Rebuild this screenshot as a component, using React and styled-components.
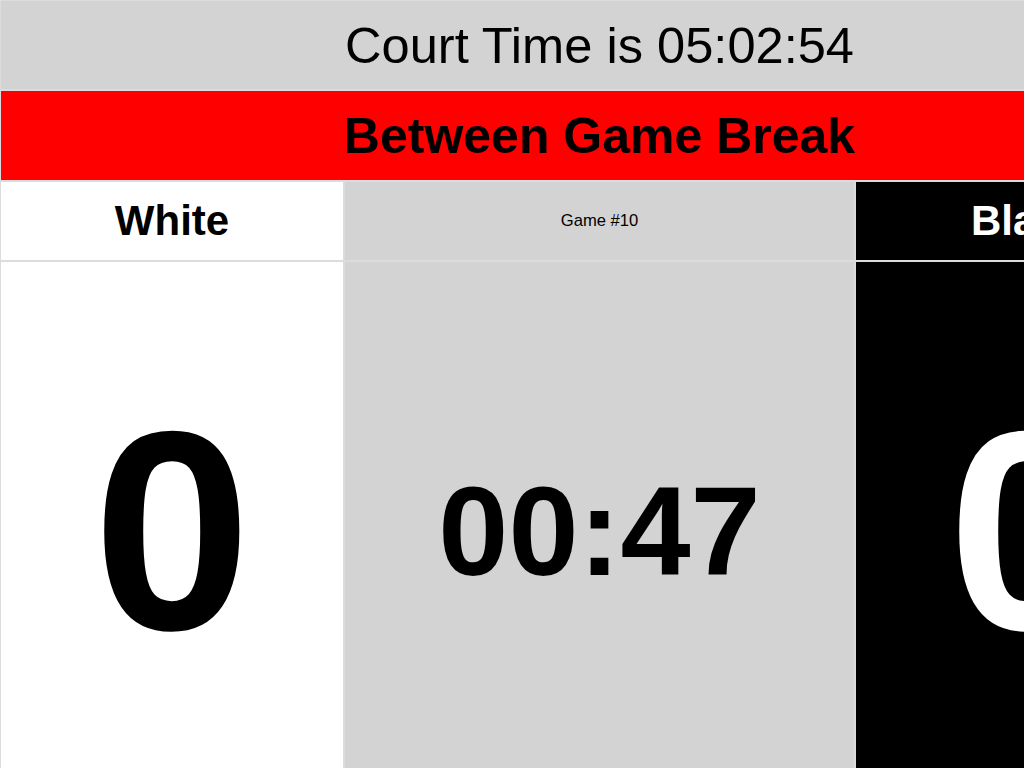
import styled, { createGlobalStyle } from 'styled-components'

const GlobalStyle = createGlobalStyle`
    html, body {
        margin: 0;
        padding: 0;
        overflow: hidden;
        font-family: "Liberation Sans", Arial, sans-serif;
        background: #fff;
    }
`

const teams = {
    home: { name: "White", score: 0, bg: "#ffffff", fg: "#000000" },
    away: { name: "Black", score: 0, bg: "#000000", fg: "#ffffff" },
};

function App() {
    return (
        <>
            <GlobalStyle />
            <Board>
                <Banner>Court Time is 05:02:54</Banner>
                <Status>Between Game Break</Status>
                <TeamName $bg={teams.home.bg} $fg={teams.home.fg}>{teams.home.name}</TeamName>
                <GameLabel>Game #10</GameLabel>
                <TeamName $bg={teams.away.bg} $fg={teams.away.fg}>{teams.away.name}</TeamName>
                <Score $bg={teams.home.bg} $fg={teams.home.fg}>{teams.home.score}</Score>
                <Clock>00:47</Clock>
                <Score $bg={teams.away.bg} $fg={teams.away.fg}>{teams.away.score}</Score>
            </Board>
        </>
    )
}

export default App;

const Board = styled.main`
    width: 1199px;
    display: grid;
    grid-template-columns: 342px 509px 342px;
    grid-template-rows: 88px 89px 78px 538px;
    gap: 2px;
    padding: 1px 0 1px 1px;
    background: #dcdcdc;
`
const Cell = styled.div`
    display: flex;
    align-items: center;
    justify-content: center;
    background: lightgray;
    color: #000;
    white-space: nowrap;
`
const Banner = styled(Cell)`
    grid-column: 1 / -1;
    font-size: 50.6px;
`
const Status = styled(Cell)`
    grid-column: 1 / -1;
    background: red;
    font-size: 50px;
    font-weight: bold;
`
const TeamName = styled(Cell)`
    background: ${p => p.$bg};
    color: ${p => p.$fg};
    font-size: 42px;
    font-weight: bold;
`
const GameLabel = styled(Cell)`
    font-size: 16.6px;
`
const Score = styled(Cell)`
    background: ${p => p.$bg};
    color: ${p => p.$fg};
    font-size: 284px;
    font-weight: bold;
`
const Clock = styled(Cell)`
    font-size: 126px;
    font-weight: bold;
`
